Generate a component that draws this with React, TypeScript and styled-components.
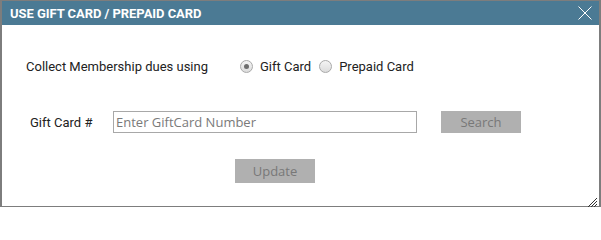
import React from "react";
import styled, { createGlobalStyle } from "styled-components";

const Global = createGlobalStyle`
  html, body { margin: 0; padding: 0; background: #ffffff; }
  body { font-family: Roboto, "Liberation Sans", sans-serif; }
  * { box-sizing: border-box; }
`;

const Dialog = styled.div`
  position: relative;
  width: 601px;
  height: 207px;
  border: 1px solid #7d7d7d;
  border-left-width: 2px;
  border-right-width: 2px;
  background: #ffffff;
  display: flex;
  flex-direction: column;
`;

const Header = styled.div`
  height: 24px;
  background: #4b7a94;
  display: flex;
  align-items: center;
  justify-content: space-between;
  padding: 0 6px 0 8px;
`;

const Title = styled.div`
  color: #ffffff;
  font-family: Roboto, "Liberation Sans", sans-serif;
  font-weight: 700;
  font-size: 13px;
  letter-spacing: -0.05px;
`;

const Close = styled.button`
  width: 16px;
  height: 16px;
  padding: 0;
  border: none;
  background: transparent;
  display: flex;
  align-items: center;
  justify-content: center;
  cursor: pointer;
`;

const Body = styled.div`
  flex: 1;
  display: flex;
  flex-direction: column;
`;

const Row = styled.div<{ $top: number; $left: number }>`
  display: flex;
  align-items: center;
  margin-top: ${(p) => p.$top}px;
  padding-left: ${(p) => p.$left}px;
`;

const Label = styled.span<{ $width: number }>`
  width: ${(p) => p.$width}px;
  font-size: 13px;
  color: #222222;
`;

const RadioLabel = styled.label<{ $gap: number }>`
  display: flex;
  align-items: center;
  font-size: 13px;
  color: #222222;
  margin-right: ${(p) => p.$gap}px;
`;

const RadioDot = styled.span<{ $checked?: boolean }>`
  width: 13px;
  height: 13px;
  border-radius: 50%;
  border: 1px solid #a9a9a9;
  background: linear-gradient(#f4f4f4, #dcdcdc);
  margin-right: 7px;
  display: flex;
  align-items: center;
  justify-content: center;
  &::after {
    content: "";
    display: ${(p) => (p.$checked ? "block" : "none")};
    width: 5px;
    height: 5px;
    border-radius: 50%;
    background: #6d6d6d;
  }
`;

const Input = styled.input`
  width: 304px;
  height: 22px;
  border: 1px solid #a8a8a8;
  padding: 0 2px;
  font-family: "Open Sans", "Noto Sans", sans-serif;
  font-size: 13px;
  color: #333;
  outline: none;
  &::placeholder { color: #7a7a7a; }
`;

const Button = styled.button<{ $h: number; $ml?: number }>`
  width: 80px;
  height: ${(p) => p.$h}px;
  margin-left: ${(p) => p.$ml ?? 0}px;
  border: none;
  background: #b0b0b0;
  color: #787878;
  font-family: "Open Sans", "Noto Sans", sans-serif;
  font-size: 13px;
  padding: 0;
`;

const Grip = styled.div`
  position: absolute;
  right: 1px;
  bottom: 1px;
  width: 12px;
  height: 12px;
`;

export default function App() {
  return (
    <>
      <Global />
      <Dialog>
        <Header>
          <Title>USE GIFT CARD / PREPAID CARD</Title>
          <Close aria-label="close">
            <svg width="14" height="14" viewBox="0 0 14 14">
              <path d="M0.5 0.5 L13.5 13.5 M13.5 0.5 L0.5 13.5" stroke="#ffffff" strokeWidth="1" fill="none" />
            </svg>
          </Close>
        </Header>
        <Body>
          <Row $top={34} $left={24}>
            <Label $width={214}>Collect Membership dues using</Label>
            <RadioLabel $gap={8}>
              <RadioDot $checked />
              Gift Card
            </RadioLabel>
            <RadioLabel $gap={0}>
              <RadioDot />
              Prepaid Card
            </RadioLabel>
          </Row>
          <Row $top={37} $left={28}>
            <Label $width={83}>Gift Card #</Label>
            <Input placeholder="Enter GiftCard Number" />
            <Button $h={22} $ml={24}>Search</Button>
          </Row>
          <Row $top={26} $left={233}>
            <Button $h={24}>Update</Button>
          </Row>
        </Body>
        <Grip>
          <svg width="12" height="12" viewBox="0 0 12 12">
            <path d="M11 2 L2 11 M11 5 L5 11 M11 8 L8 11" stroke="#333" strokeWidth="1" fill="none" />
          </svg>
        </Grip>
      </Dialog>
    </>
  );
}
